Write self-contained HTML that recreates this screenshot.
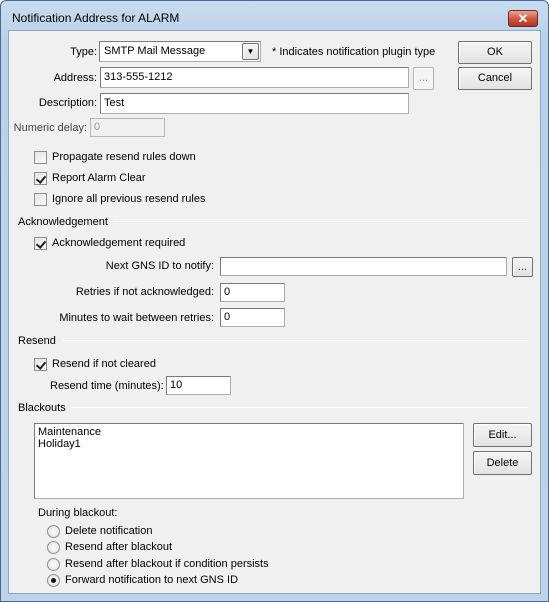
<!DOCTYPE html>
<html><head><style>
*{margin:0;padding:0;box-sizing:border-box}
body{width:549px;height:602px;overflow:hidden;background:#fff;font-family:"Liberation Sans",sans-serif;font-size:11px;color:#000}
#win{position:absolute;left:0;top:0;width:549px;height:602px;background:linear-gradient(#c9dcf0,#b9d1ea 40px,#bcd3eb);border:1px solid #4a6a8e;border-radius:6px 6px 0 0}
#client{position:absolute;left:8px;top:30px;width:533px;height:564px;background:#f0f0f0;border:1px solid #8ea7c2}
.a{position:absolute;white-space:nowrap;line-height:14px}
.r{text-align:right}
.in{position:absolute;background:#fff;border:1px solid #abadb3;border-top-color:#7a7a7a;border-left-color:#7a7a7a;padding:1px 3px;line-height:17px}
.dis{background:#f0f0f0;color:#9a9a9a;border-color:#b5b5b5}
.btn{position:absolute;background:linear-gradient(#f4f4f4,#e3e3e3);border:1px solid #707070;border-radius:2px;text-align:center;box-shadow:inset 1px 1px #fff}
.cb{position:absolute;width:13px;height:13px;border:1px solid #8e8f8f;background:linear-gradient(135deg,#e4e4e4,#fbfbfb)}
.cb.on::after{content:"";position:absolute;left:3px;top:1px;width:4px;height:7px;border:solid #222;border-width:0 2px 2px 0;transform:rotate(40deg)}
.rd{position:absolute;width:13px;height:13px;border-radius:50%;border:1px solid #8e8f8f;background:radial-gradient(#fff,#dcdcdc)}
.rd.on::after{content:"";position:absolute;left:3px;top:3px;width:5px;height:5px;border-radius:50%;background:#111}
.ln{position:absolute;height:1px;background:#a0a0a0;border-bottom:1px solid #fff}
</style></head><body>
<div id="win"></div>
<div class="a" style="left:12px;top:11px;font-size:12px">Notification Address for ALARM</div>
<div style="position:absolute;left:508px;top:10px;width:30px;height:17px;border:1px solid #6b2a20;border-radius:3px;background:linear-gradient(#e8a395,#cf5a44 50%,#b8321d);color:#fff;font-weight:bold;text-align:center;line-height:15px;font-size:13px">✕</div>
<div id="client"></div>

<div class="a r" style="left:20px;top:45px;width:77px">Type:</div>
<div class="in" style="left:99px;top:41px;width:162px;height:21px;padding-left:4px">SMTP Mail Message</div>
<div class="btn" style="left:242px;top:43px;width:17px;height:17px;font-size:8px;line-height:15px">▼</div>
<div class="a" style="left:272px;top:45px">* Indicates notification plugin type</div>
<div class="btn" style="left:458px;top:41px;width:74px;height:23px;line-height:21px">OK</div>
<div class="btn" style="left:458px;top:67px;width:74px;height:23px;line-height:21px">Cancel</div>

<div class="a r" style="left:20px;top:71px;width:77px">Address:</div>
<div class="in" style="left:100px;top:67px;width:309px;height:21px">313-555-1212</div>
<div class="btn" style="left:413px;top:67px;width:21px;height:23px;line-height:21px;color:#999;background:#f4f4f4;border-color:#adb2b5">...</div>

<div class="a r" style="left:10px;top:96px;width:87px">Description:</div>
<div class="in" style="left:100px;top:93px;width:309px;height:21px">Test</div>

<div class="a r" style="left:0;top:121px;width:87px;color:#444">Numeric delay:</div>
<div class="in dis" style="left:90px;top:118px;width:75px;height:19px;line-height:15px">0</div>

<div class="cb" style="left:34px;top:151px"></div><div class="a" style="left:52px;top:150px">Propagate resend rules down</div>
<div class="cb on" style="left:34px;top:172px"></div><div class="a" style="left:52px;top:171px">Report Alarm Clear</div>
<div class="cb" style="left:34px;top:193px"></div><div class="a" style="left:52px;top:192px">Ignore all previous resend rules</div>

<div class="a" style="left:18px;top:215px">Acknowledgement</div>
<div class="ln" style="left:113px;top:221px;width:415px"></div>
<div class="cb on" style="left:34px;top:237px"></div><div class="a" style="left:52px;top:236px">Acknowledgement required</div>

<div class="a r" style="left:60px;top:259px;width:154px">Next GNS ID to notify:</div>
<div class="in" style="left:220px;top:257px;width:287px;height:19px"></div>
<div class="btn" style="left:512px;top:257px;width:21px;height:20px;line-height:18px">...</div>
<div class="a r" style="left:40px;top:285px;width:174px">Retries if not acknowledged:</div>
<div class="in" style="left:220px;top:283px;width:65px;height:19px;line-height:15px">0</div>
<div class="a r" style="left:20px;top:311px;width:194px">Minutes to wait between retries:</div>
<div class="in" style="left:220px;top:308px;width:65px;height:19px;line-height:15px">0</div>

<div class="a" style="left:18px;top:334px">Resend</div>
<div class="ln" style="left:63px;top:340px;width:465px"></div>
<div class="cb on" style="left:34px;top:358px"></div><div class="a" style="left:52px;top:357px">Resend if not cleared</div>
<div class="a" style="left:50px;top:379px">Resend time (minutes):</div>
<div class="in" style="left:166px;top:376px;width:65px;height:19px;line-height:15px">10</div>

<div class="a" style="left:18px;top:401px">Blackouts</div>
<div class="ln" style="left:72px;top:407px;width:456px"></div>
<div class="in" style="left:34px;top:423px;width:430px;height:76px;line-height:12px;padding:2px 3px">Maintenance<br>Holiday1</div>
<div class="btn" style="left:473px;top:423px;width:59px;height:24px;line-height:22px">Edit...</div>
<div class="btn" style="left:473px;top:451px;width:59px;height:24px;line-height:22px">Delete</div>

<div class="a" style="left:38px;top:506px">During blackout:</div>
<div class="rd" style="left:47px;top:525px"></div><div class="a" style="left:65px;top:524px">Delete notification</div>
<div class="rd" style="left:47px;top:541px"></div><div class="a" style="left:65px;top:540px">Resend after blackout</div>
<div class="rd" style="left:47px;top:558px"></div><div class="a" style="left:65px;top:557px">Resend after blackout if condition persists</div>
<div class="rd on" style="left:47px;top:574px"></div><div class="a" style="left:65px;top:573px">Forward notification to next GNS ID</div>
</body></html>
